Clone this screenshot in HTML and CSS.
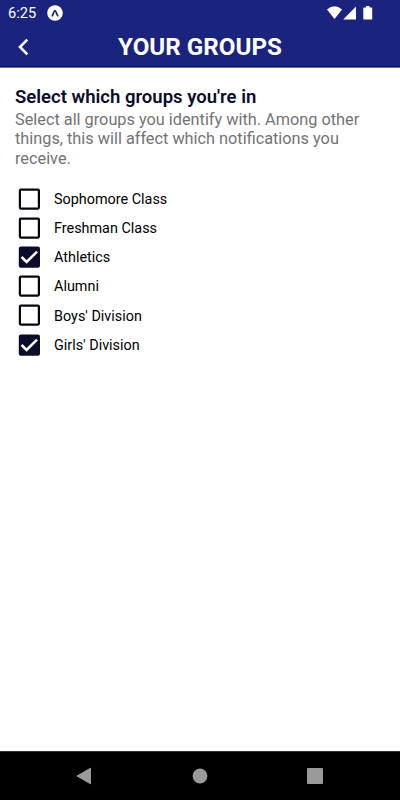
FILE: index.html
```html
<!DOCTYPE html>
<html lang="en">
<head>
<meta charset="utf-8">
<title>Your Groups</title>
<link rel="stylesheet" href="styles.css">
</head>
<body>
<svg class="defs" width="0" height="0" aria-hidden="true">
  <symbol id="box" viewBox="0 0 28 28"><rect x="4.900" y="4.600" width="19" height="19" rx="1" fill="none" stroke="#050510" stroke-width="2.200"/></symbol>
  <symbol id="checked" viewBox="0 0 28 28"><rect x="3.800" y="3.500" width="21.200" height="21.200" rx="2" fill="#0c0c2b"/><path d="M6.600 14l5 5L22 8.700" fill="none" stroke="#fff" stroke-width="2.500"/></symbol>
</svg>
<div class="screen">
  <header class="top">
    <div class="status">
      <span class="time">6:25</span>
      <svg class="app" width="16" height="16" viewBox="0 0 16 16"><circle cx="8" cy="8" r="7.800" fill="#fff"/><path d="M5.300 11.200C6.600 9 7 6.200 8 6.200S9.400 9 10.700 11.200" transform="translate(0 -.5)" fill="none" stroke="#1a237e" stroke-width="1.700" stroke-linecap="round"/></svg>
      <svg class="signals" width="48" height="16" viewBox="0 0 48 16"><g fill="#fff"><path d="M1 4.500Q8.500-1.800 16 4.500L8.500 14z"/><path d="M30 1.600V14.500H17.200z"/><path d="M38 2.500h2V1.100h3.500v1.400h2q.7 0 .7.700v10.700q0 .7-.7.700H38q-.7 0-.7-.7V3.200q0-.7.700-.7z"/></g></svg>
    </div>
    <div class="bar">
      <svg class="back" width="14" height="18" viewBox="0 0 14 18"><path d="M11.300 1.700L4 9l7.300 7.300" fill="none" stroke="#fff" stroke-width="2.600"/></svg>
      <h1>YOUR GROUPS</h1>
    </div>
  </header>
  <main>
    <h2>Select which groups you're in</h2>
    <p>Select all groups you identify with. Among other<br>things, this will affect which notifications you<br>receive.</p>
    <ul>
      <li><svg><use href="#box"/></svg><span>Sophomore Class</span></li>
      <li><svg><use href="#box"/></svg><span>Freshman Class</span></li>
      <li><svg><use href="#checked"/></svg><span>Athletics</span></li>
      <li><svg><use href="#box"/></svg><span>Alumni</span></li>
      <li><svg><use href="#box"/></svg><span>Boys' Division</span></li>
      <li><svg><use href="#checked"/></svg><span>Girls' Division</span></li>
    </ul>
  </main>
  <nav>
    <svg width="16" height="18" viewBox="0 0 16 18"><path d="M1 9L14.500 1.200v15.600z" fill="#9a9a9a" stroke="#9a9a9a" stroke-linejoin="round"/></svg>
    <svg width="16" height="16" viewBox="0 0 16 16"><circle cx="8" cy="8" r="7.400" fill="#9a9a9a"/></svg>
    <svg width="16" height="16" viewBox="0 0 16 16"><rect width="16" height="16" rx="1" fill="#9a9a9a"/></svg>
  </nav>
</div>
</body>
</html>
```
FILE: styles.css
```css
* { box-sizing: border-box; margin: 0; padding: 0; }
body { font-family: Roboto, sans-serif; background: #fff; }
svg { display: block; flex: none; }
.defs { position: absolute; }
.screen { height: 800px; display: flex; flex-direction: column; }
.top { height: 68px; background: #1a237e; border-bottom: 1px solid #6c70ad; color: #fff; box-shadow: inset 0 -1px #0a0a70; }
.status { height: 25px; display: flex; align-items: center; padding: 0 26px 0 8px; }
.time { font-size: 14.600px; font-weight: 400; width: 38.500px; }
.signals { margin-left: auto; margin-top: 0; }
.bar { height: 42px; display: flex; align-items: center; padding: 2px 0 0 16px; }
.bar h1 { flex: 1; text-align: center; padding-right: 30px; font-size: 24.200px; font-weight: 700; line-height: 28px; }
main { flex: 1; padding: 17px 15px 0; }
h2 { font-size: 18.520px; font-weight: 600; line-height: 24px; color: #0c0c2b; white-space: nowrap; }
p { font-size: 16.300px; line-height: 19.300px; color: #737373; margin-top: 1px; white-space: nowrap; }
ul { list-style: none; margin-top: 16.200px; }
li { height: 29.200px; display: flex; align-items: center; font-size: 14.400px; color: #000; gap: 11px; }
li span { padding-top: 1.400px; }
li svg { width: 28px; height: 28px; }
nav { height: 49px; background: #000; border-top: 1px solid #333; display: flex; align-items: center; justify-content: space-between; padding: 0 77px 0 76px; }
```
